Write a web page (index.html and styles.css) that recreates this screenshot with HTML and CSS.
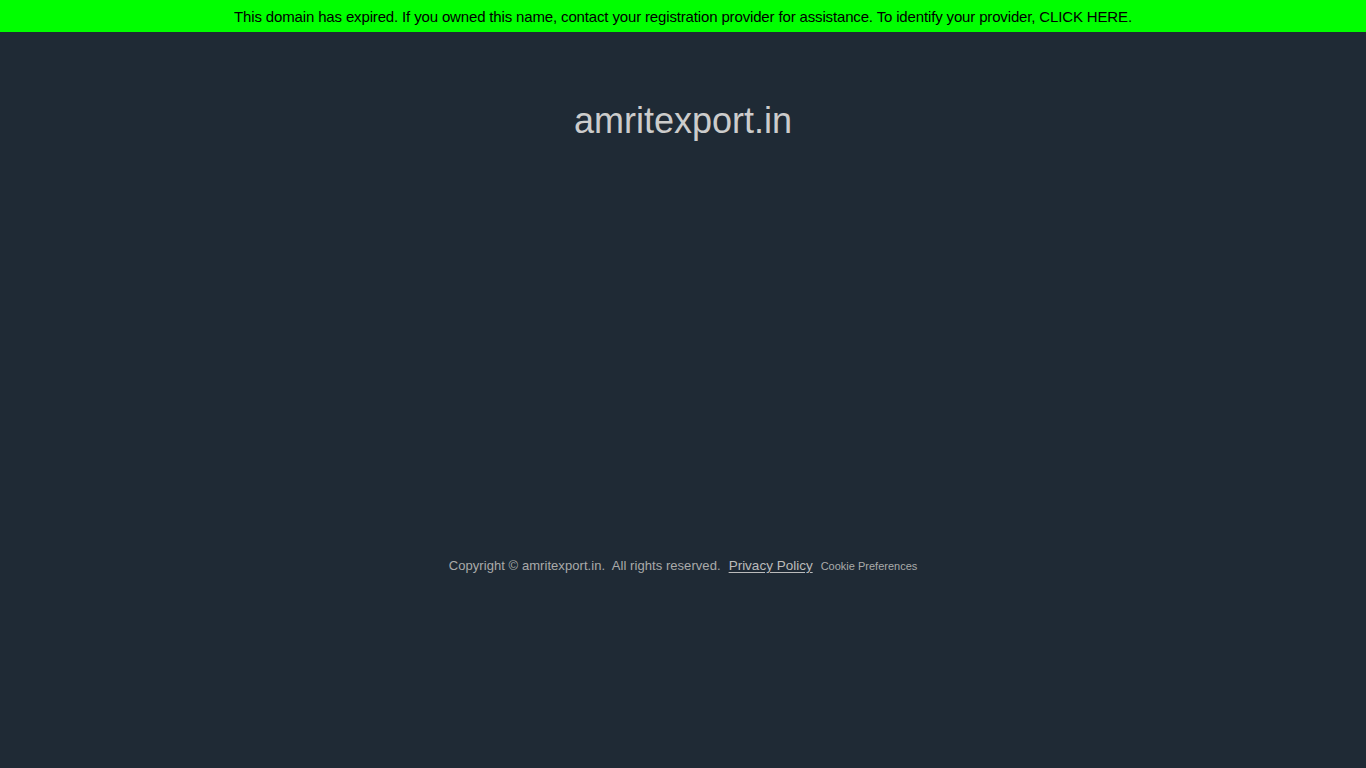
FILE: index.html
```html
<!DOCTYPE html>
<html>
<head>
<meta charset="utf-8">
<title>amritexport.in</title>
<link rel="stylesheet" href="styles.css">
</head>
<body>
<div class="banner">This domain has expired. If you owned this name, contact your registration provider for assistance. To identify your provider, <a href="#" class="banner-link">CLICK HERE</a>.</div>
<main class="content">
  <h1 class="domain">amritexport.in</h1>
</main>
<footer class="footer">
  <span class="copy">Copyright © amritexport.in.&nbsp; All rights reserved.</span>
  <a href="#" class="privacy">Privacy Policy</a>
  <a href="#" class="cookie">Cookie Preferences</a>
</footer>
</body>
</html>
```
FILE: styles.css
```css
html, body {
  margin: 0;
  padding: 0;
  height: 100%;
}
body {
  background: #1f2a35;
  font-family: "Liberation Sans", Arial, sans-serif;
  color: #c8c8c8;
}
.banner {
  background: #00ff00;
  color: #000;
  height: 32px;
  line-height: 34px;
  font-size: 15px;
  letter-spacing: -0.15px;
  text-align: center;
}
.banner-link {
  color: #000;
  text-decoration: none;
}
.content {
  height: 486px;
  display: flex;
  justify-content: center;
}
.domain {
  margin: 0;
  padding-top: 67px;
  font-size: 36px;
  font-weight: normal;
  color: #cccccc;
  line-height: 44px;
}
.footer {
  display: flex;
  justify-content: center;
  align-items: baseline;
  gap: 8px;
  padding-top: 40px;
  font-size: 13px;
  color: #aaaaaa;
}
.copy {
  letter-spacing: 0.06px;
}
.privacy {
  color: #bbbbbb;
  font-size: 13.5px;
  text-decoration: underline;
  text-underline-offset: 2px;
}
.cookie {
  color: #aaaaaa;
  font-size: 11px;
  text-decoration: none;
}
```
